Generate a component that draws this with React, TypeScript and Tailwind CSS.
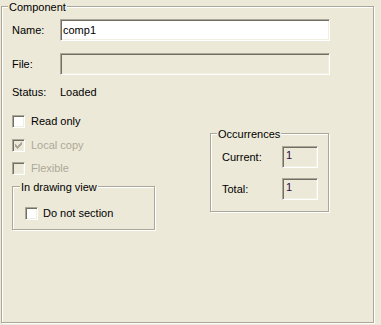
import React from 'react';

const sunken =
  'border border-t-[#ACA899] border-l-[#ACA899] border-r-white border-b-white shadow-[inset_1px_1px_0_#716F64,inset_-1px_-1px_0_#F1EFE2]';
const etched = 'border border-[#ACA899] shadow-[inset_1px_1px_0_#fff,1px_1px_0_#fff]';

const CheckMark: React.FC<{ color: string }> = ({ color }) => (
  <svg width={7} height={7} viewBox="0 0 7 7" shapeRendering="crispEdges">
    <path
      d="M0 2h1v3h-1z M1 3h1v3h-1z M2 4h1v3h-1z M3 3h1v3h-1z M4 2h1v3h-1z M5 1h1v3h-1z M6 0h1v3h-1z"
      fill={color}
    />
  </svg>
);

const CheckBox: React.FC<{ label: string; checked?: boolean; disabled?: boolean; gap?: string }> = ({
  label,
  checked,
  disabled,
  gap = 'ml-[6px]',
}) => (
  <div className="flex items-center h-[13px]">
    <span
      className={`inline-flex items-start w-[13px] h-[13px] p-[2px] ${sunken} ${
        disabled ? 'bg-[#ECE9D8]' : 'bg-white'
      }`}
    >
      {checked && <CheckMark color={disabled ? '#ACA899' : '#000'} />}
    </span>
    <span className={`${gap} ${disabled ? 'text-[#ACA899]' : 'text-black'}`}>{label}</span>
  </div>
);

const Legend: React.FC<{ text: string; left: string }> = ({ text, left }) => (
  <span className={`absolute ${left} top-[-6px] px-[1px] bg-[#ECE9D8] leading-[13px]`}>{text}</span>
);

export default function App() {
  return (
    <div className="w-[381px] h-[325px] bg-[#ECE9D8] pt-[6px] pl-[1px] font-['Liberation_Sans',Arial,sans-serif] text-[11px] leading-[13px] text-black">
      <div className={`relative w-[373px] h-[317px] ${etched}`}>
        <Legend text="Component" left="left-[6px]" />

        <div className="flex flex-col pl-[10px] pt-[12px]">
          {/* Name / File / Status */}
          <div className="flex items-center h-[22px]">
            <span className="w-[48px]">Name:</span>
            <div className={`w-[270px] h-[22px] bg-white pl-[2px] pt-[4px] ${sunken}`}>comp1</div>
          </div>
          <div className="flex items-center h-[22px] mt-[12px]">
            <span className="w-[48px]">File:</span>
            <div className={`w-[270px] h-[22px] bg-[#ECE9D8] ${sunken}`} />
          </div>
          <div className="flex items-center h-[13px] mt-[11px]">
            <span className="w-[48px]">Status:</span>
            <span>Loaded</span>
          </div>

          {/* Options + occurrences */}
          <div className="flex mt-[16px]">
            <div className="flex flex-col w-[143px]">
              <CheckBox label="Read only" />
              <div className="mt-[11px]">
                <CheckBox label="Local copy" checked disabled />
              </div>
              <div className="mt-[10px]">
                <CheckBox label="Flexible" disabled />
              </div>
              <div className={`relative mt-[11px] w-[143px] h-[44px] ${etched}`}>
                <Legend text="In drawing view" left="left-[7px]" />
                <div className="pl-[12px] pt-[20px]">
                  <CheckBox label="Do not section" gap="ml-[5px]" />
                </div>
              </div>
            </div>

            <div className={`relative ml-[55px] mt-[18px] w-[119px] h-[79px] ${etched}`}>
              <Legend text="Occurrences" left="left-[6px]" />
              <div className="flex flex-col pl-[11px] pt-[12px]">
                <div className="flex items-center h-[22px]">
                  <span className="w-[60px]">Current:</span>
                  <div className={`w-[36px] h-[22px] pl-[3px] pt-[2px] text-[#2a0a44] ${sunken}`}>1</div>
                </div>
                <div className="flex items-center h-[22px] mt-[10px]">
                  <span className="w-[60px]">Total:</span>
                  <div className={`w-[36px] h-[22px] pl-[3px] pt-[2px] text-[#2a0a44] ${sunken}`}>1</div>
                </div>
              </div>
            </div>
          </div>
        </div>
      </div>
    </div>
  );
}
